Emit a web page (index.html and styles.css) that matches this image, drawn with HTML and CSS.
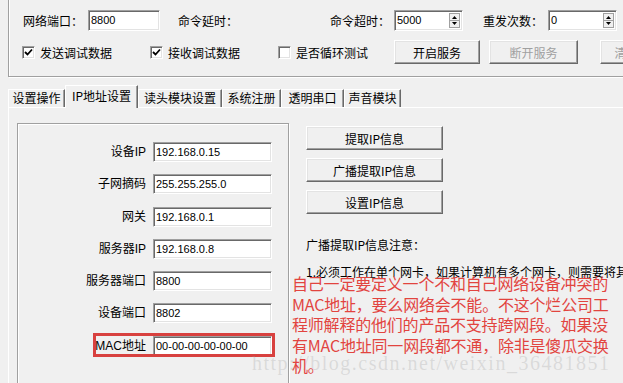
FILE: index.html
```html
<!DOCTYPE html>
<html lang="zh-CN">
<head>
    <meta charset="UTF-8">
    <title>IP地址设置</title>
    <link rel="stylesheet" href="styles.css">
</head>
<body>
<div class="screen">
    <div class="group-top">
        <div class="row row-fields">
            <span class="lbl lbl-port">网络端口：</span>
            <span class="edit edit-port">8800</span>
            <span class="lbl lbl-delay">命令延时：</span>
            <span class="lbl lbl-timeout">命令超时：</span>
            <span class="edit spin"><span>5000</span><svg class="arrows" width="11" height="15" viewBox="0 0 11 15"><rect x="0.5" y="0.5" width="10" height="14" fill="#f0f0f0" stroke="#a0a0a0"/><line x1="1" y1="7.5" x2="10" y2="7.5" stroke="#a0a0a0"/><path d="M3 6 L8 6 L5.5 3 Z" fill="#000"/><path d="M3 9 L8 9 L5.5 12 Z" fill="#000"/></svg></span>
            <span class="lbl lbl-retry">重发次数：</span>
            <span class="edit spin"><span>0</span><svg class="arrows" width="11" height="15" viewBox="0 0 11 15"><rect x="0.5" y="0.5" width="10" height="14" fill="#f0f0f0" stroke="#a0a0a0"/><line x1="1" y1="7.5" x2="10" y2="7.5" stroke="#a0a0a0"/><path d="M3 6 L8 6 L5.5 3 Z" fill="#000"/><path d="M3 9 L8 9 L5.5 12 Z" fill="#000"/></svg></span>
        </div>
        <div class="row row-checks">
            <label class="check check-wide"><span class="box"><svg width="9" height="9" viewBox="0 0 9 9"><path d="M1 4 L3.5 6.5 L8 1.5" fill="none" stroke="#000" stroke-width="1.8"/></svg></span>发送调试数据</label>
            <label class="check check-wide"><span class="box"><svg width="9" height="9" viewBox="0 0 9 9"><path d="M1 4 L3.5 6.5 L8 1.5" fill="none" stroke="#000" stroke-width="1.8"/></svg></span>接收调试数据</label>
            <label class="check check-short"><span class="box"></span>是否循环测试</label>
            <span class="btn btn-start">开启服务</span>
            <span class="btn btn-stop disabled">断开服务</span>
            <span class="btn btn-clear disabled">清空接收区</span>
        </div>
    </div>

    <div class="tabs">
        <span class="tab t1">设置操作</span>
        <span class="tab t2 active">IP地址设置</span>
        <span class="tab t3">读头模块设置</span>
        <span class="tab t4">系统注册</span>
        <span class="tab t5">透明串口</span>
        <span class="tab t6">声音模块</span>
    </div>

    <div class="page">
        <div class="group-ip">
            <span class="ip-lbl">设备IP</span><span class="edit ip-edit">192.168.0.15</span>
            <span class="ip-lbl">子网摘码</span><span class="edit ip-edit">255.255.255.0</span>
            <span class="ip-lbl">网关</span><span class="edit ip-edit">192.168.0.1</span>
            <span class="ip-lbl">服务器IP</span><span class="edit ip-edit">192.168.0.8</span>
            <span class="ip-lbl">服务器端口</span><span class="edit ip-edit">8800</span>
            <span class="ip-lbl">设备端口</span><span class="edit ip-edit">8802</span>
            <span class="ip-lbl">MAC地址</span><span class="edit ip-edit">00-00-00-00-00-00</span>
            <span class="mac-mark"></span>
        </div>
        <div class="side">
            <span class="btn btn-side">提取IP信息</span>
            <span class="btn btn-side">广播提取IP信息</span>
            <span class="btn btn-side">设置IP信息</span>
            <div class="note-title">广播提取IP信息注意：</div>
            <div class="note">1.必须工作在单个网卡，如果计算机有多个网卡，则需要将其</div>
        </div>
    </div>

    <div class="mark">http://blog.csdn.net/weixin_36481851</div>
    <div class="annot">自己一定要定义一个不和自己网络设备冲突的<br>MAC地址，要么网络会不能。不这个烂公司工<br>程师解释的他们的产品不支持跨网段。如果没<br>有MAC地址同一网段都不通，除非是傻瓜交换<br>机。</div>
</div>
</body>
</html>
```

FILE: styles.css
```css
* {
    box-sizing: border-box;
}
body {
    margin: 0;
    background-color: #f0f0f0;
    font-family: "Liberation Sans", "Noto Sans CJK SC", sans-serif;
    font-size: 12px;
    color: #000;
}
.screen {
    position: relative;
    width: 623px;
    height: 383px;
    overflow: hidden;
}

/* top settings box */
.group-top {
    margin: -12px 0 0 8px;
    width: 720px;
    height: 89px;
    border: 1px solid #a0a0a0;
    box-shadow: 1px 1px 0 #fff, inset 1px 1px 0 #fff;
    padding: 21px 0 0 14px;
}
.row {
    display: flex;
    align-items: center;
    white-space: nowrap;
}
.row-fields {
    height: 21px;
}
.row-checks {
    height: 24px;
    margin-top: 9px;
    margin-left: -1px;
}
.lbl {
    font-family: "Noto Sans CJK SC", sans-serif;
    line-height: 14px;
}
.lbl-port { width: 65px; }
.lbl-delay { width: 152px; margin-left: 18px; }
.lbl-timeout { width: 64px; }
.lbl-retry { width: 65px; margin-left: 20px; }

.edit {
    display: block;
    height: 21px;
    background-color: #fff;
    border: 1px solid;
    border-color: #a0a0a0 #fff #fff #a0a0a0;
    box-shadow: inset 1px 1px 0 #696969, inset -1px -1px 0 #e3e3e3;
    font-size: 11px;
    line-height: 19px;
    padding-left: 2px;
    white-space: nowrap;
}
.edit-port { width: 72px; }
.spin {
    width: 69px;
    display: flex;
    justify-content: space-between;
    align-items: center;
    padding-right: 2px;
}
.arrows {
    display: block;
}

.check {
    display: flex;
    align-items: center;
    gap: 5px;
    font-family: "Noto Sans CJK SC", sans-serif;
}
.check-wide { width: 128px; }
.check-short { width: 116px; }
.box {
    width: 13px;
    height: 13px;
    background-color: #fff;
    border: 1px solid;
    border-color: #a0a0a0 #fff #fff #a0a0a0;
    box-shadow: inset 1px 1px 0 #696969, inset -1px -1px 0 #e3e3e3;
    display: flex;
    align-items: center;
    justify-content: center;
}

.btn {
    height: 24px;
    border: 1px solid;
    border-color: #fff #696969 #696969 #fff;
    box-shadow: inset -1px -1px 0 #a0a0a0, inset 1px 1px 0 #e3e3e3;
    background-color: #f0f0f0;
    display: flex;
    align-items: center;
    justify-content: center;
    font-family: "Noto Sans CJK SC", sans-serif;
    white-space: nowrap;
}
.btn-start { width: 86px; }
.btn-stop { width: 89px; margin-left: 9px; }
.btn-clear { width: 89px; margin-left: 22px; }
.disabled {
    color: #a0a0a0;
}

/* tabs */
.tabs {
    display: flex;
    align-items: flex-end;
    height: 22px;
    margin-top: 8px;
    padding-left: 8px;
    font-family: "Noto Sans CJK SC", sans-serif;
}
.tab {
    height: 18px;
    border-top: 1px solid #fff;
    border-left: 1px solid #fff;
    border-right: 1px solid #696969;
    box-shadow: inset -1px 0 0 #a0a0a0;
    line-height: 16px;
    text-align: center;
    white-space: nowrap;
}
.tab.active {
    position: relative;
    z-index: 1;
    height: 23px;
    margin-bottom: -1px;
    background-color: #f0f0f0;
    line-height: 20px;
}
.t1 { width: 57px; }
.t2 { width: 73px; }
.t3 { width: 84px; }
.t4 { width: 59px; }
.t5 { width: 63px; }
.t6 { width: 57px; }

.page {
    margin-left: 8px;
    height: 290px;
    border-top: 1px solid #fff;
    border-left: 1px solid #fff;
    padding: 15px 0 0 8px;
    display: flex;
    gap: 17px;
}

.group-ip {
    position: relative;
    width: 272px;
    height: 300px;
    flex-shrink: 0;
    border: 1px solid #a0a0a0;
    box-shadow: 1px 1px 0 #fff, inset 1px 1px 0 #fff;
    padding-top: 18px;
    display: grid;
    grid-template-columns: 128px 119px;
    grid-auto-rows: 20px;
    column-gap: 7px;
    row-gap: 12.3px;
    align-content: start;
}
.ip-lbl {
    font-family: "Liberation Sans", "Noto Sans CJK SC", sans-serif;
    text-align: right;
    line-height: 20px;
    white-space: nowrap;
}
.ip-edit {
    height: 20px;
    line-height: 18px;
}
.mac-mark {
    position: absolute;
    left: 75px;
    top: 209px;
    width: 182px;
    height: 24px;
    border: 3px solid #d8413f;
}

.side {
    display: flex;
    flex-direction: column;
    padding-top: 3px;
    gap: 8px;
    font-family: "Noto Sans CJK SC", sans-serif;
}
.btn-side {
    width: 137px;
}
.note-title {
    margin-top: 16px;
    line-height: 14px;
    white-space: nowrap;
}
.note {
    margin-top: 5px;
    line-height: 14px;
    white-space: nowrap;
}

/* annotations over the screenshot */
.annot {
    position: absolute;
    left: 292px;
    top: 273px;
    font-family: "Noto Sans CJK SC", sans-serif;
    font-size: 16px;
    line-height: 20.5px;
    letter-spacing: -0.2px;
    color: #e2443f;
    white-space: nowrap;
}
.mark {
    position: absolute;
    left: 252px;
    top: 353px;
    font-family: "Liberation Serif", serif;
    font-size: 20px;
    line-height: 20px;
    letter-spacing: 1.5px;
    color: rgba(160, 160, 160, 0.28);
    white-space: nowrap;
}
```
